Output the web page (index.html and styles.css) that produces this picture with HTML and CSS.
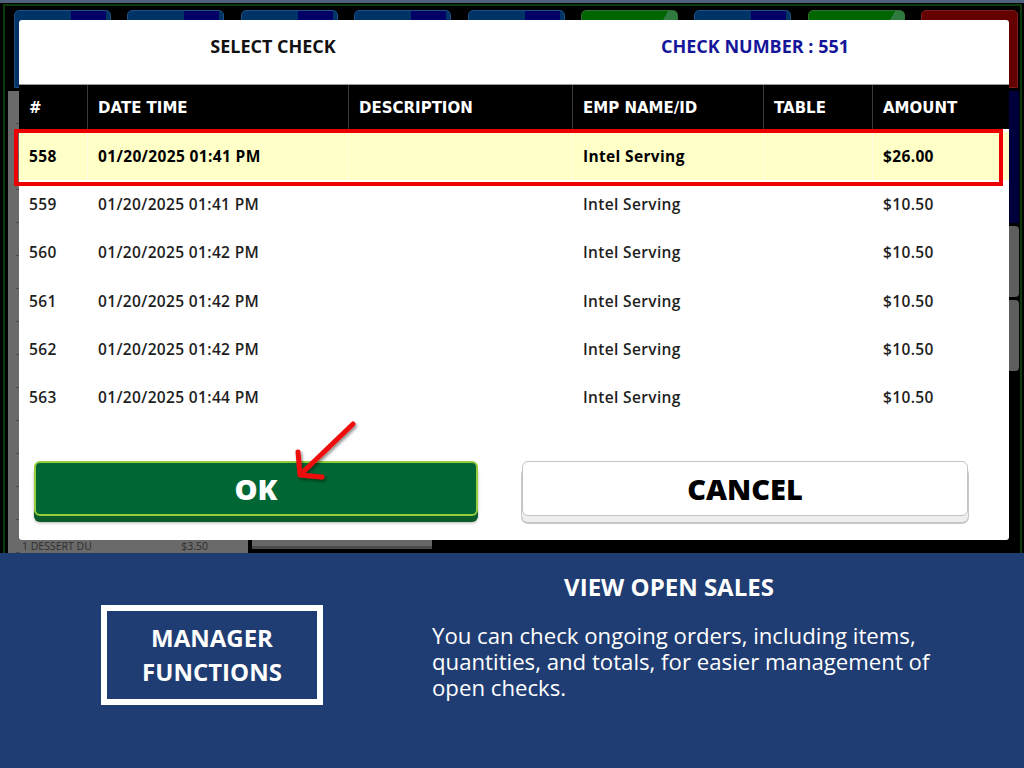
FILE: index.html
```html
<!DOCTYPE html>
<html>
<head>
<meta charset="utf-8">
<link rel="stylesheet" href="styles.css">
</head>
<body>
<div class="screen">
  <div class="pos">
    <div class="pos-topline"></div>
    <div class="pos-frame">
      <div class="tabs">
        <div class="tab tab-blue"></div>
        <div class="tab tab-blue"></div>
        <div class="tab tab-blue"></div>
        <div class="tab tab-blue"></div>
        <div class="tab tab-blue"></div>
        <div class="tab tab-green"></div>
        <div class="tab tab-blue"></div>
        <div class="tab tab-green"></div>
        <div class="tab tab-red"></div>
      </div>
      <div class="pos-body">
        <div class="order">
          <div class="order-item"><span>1 DESSERT DU</span><span>$3.50</span></div>
        </div>
        <div class="pos-mid"><div class="sub-panel"></div></div>
        <div class="pos-side">
          <div class="side-navy"></div>
          <div class="side-btn"></div>
          <div class="side-btn"></div>
        </div>
      </div>
    </div>
  </div>

  <div class="dialog">
    <div class="dlg-head">
      <div class="dlg-title">SELECT CHECK</div>
      <div class="dlg-check">CHECK NUMBER : 551</div>
    </div>
    <div class="grid">
      <div class="thead">
        <div class="th">#</div>
        <div class="th">DATE TIME</div>
        <div class="th">DESCRIPTION</div>
        <div class="th">EMP NAME/ID</div>
        <div class="th">TABLE</div>
        <div class="th">AMOUNT</div>
      </div>
      <div class="tbody">
        <div class="tr tr-sel">
          <div class="td">558</div><div class="td">01/20/2025 01:41 PM</div><div class="td"></div><div class="td">Intel Serving</div><div class="td"></div><div class="td">$26.00</div>
        </div>
        <div class="tr">
          <div class="td">559</div><div class="td">01/20/2025 01:41 PM</div><div class="td"></div><div class="td">Intel Serving</div><div class="td"></div><div class="td">$10.50</div>
        </div>
        <div class="tr">
          <div class="td">560</div><div class="td">01/20/2025 01:42 PM</div><div class="td"></div><div class="td">Intel Serving</div><div class="td"></div><div class="td">$10.50</div>
        </div>
        <div class="tr">
          <div class="td">561</div><div class="td">01/20/2025 01:42 PM</div><div class="td"></div><div class="td">Intel Serving</div><div class="td"></div><div class="td">$10.50</div>
        </div>
        <div class="tr">
          <div class="td">562</div><div class="td">01/20/2025 01:42 PM</div><div class="td"></div><div class="td">Intel Serving</div><div class="td"></div><div class="td">$10.50</div>
        </div>
        <div class="tr">
          <div class="td">563</div><div class="td">01/20/2025 01:44 PM</div><div class="td"></div><div class="td">Intel Serving</div><div class="td"></div><div class="td">$10.50</div>
        </div>
      </div>
    </div>
    <div class="actions">
      <div class="btn btn-ok">OK</div>
      <div class="btn btn-cancel">CANCEL</div>
    </div>
  </div>

  <div class="highlight"></div>
  <svg class="arrow" width="80" height="80" viewBox="0 0 80 80">
    <defs>
      <filter id="sh" x="-30%" y="-30%" width="160%" height="160%">
        <feDropShadow dx="1.5" dy="2" stdDeviation="1.5" flood-color="#000" flood-opacity="0.45"/>
      </filter>
    </defs>
    <g filter="url(#sh)" fill="none" stroke="#ee1111" stroke-width="5" stroke-linecap="round" stroke-linejoin="round">
      <path d="M68 14 L17 63"/>
      <path d="M13 42 L15 65 L37 67"/>
    </g>
  </svg>
</div>

<div class="info">
  <div class="info-box">MANAGER<br>FUNCTIONS</div>
  <div class="info-text">
    <div class="info-title">VIEW OPEN SALES</div>
    <p class="info-desc">You can check ongoing orders, including items, quantities, and totals, for easier management of open checks.</p>
  </div>
</div>
</body>
</html>
```

FILE: styles.css
```css
* { box-sizing: border-box; }
html, body { margin: 0; padding: 0; }
body {
  width: 1024px;
  height: 768px;
  overflow: hidden;
  background: #1f3d72;
  font-family: "Open Sans", "Liberation Sans", sans-serif;
}

/* ---------- background POS screen ---------- */
.screen {
  position: relative;
  height: 553px;
  background: #000;
  overflow: hidden;
}
.pos { height: 100%; display: flex; flex-direction: column; }
.pos-topline { height: 3px; background: #50617d; }
.pos-frame {
  flex: 1;
  margin: 1px 2px 0 3px;
  border: 2px solid #0b3a0b;
  border-bottom: none;
  display: flex;
  flex-direction: column;
}
.tabs {
  display: flex;
  gap: 16.4px;
  padding: 4px 0 0 9px;
  height: 82px;
}
.tab {
  width: 97px;
  height: 78px;
  border-radius: 5px 5px 0 0;
}
.tab-blue {
  background: linear-gradient(90deg, #003366 0 59%, #000066 59% 96%, #003366 96%);
  border: 1px solid #1b4f86;
}
.tab-green {
  background: linear-gradient(120deg, #006600 0 62%, #2e7a40 62% 86%, #006600 86%);
  border: 1px solid #2f6f2f;
}
.tab-red {
  background: #640000;
  border: 1px solid #7a1e1e;
}
.pos-body {
  flex: 1;
  display: flex;
  padding: 3px 0 0 3px;
}
.order {
  width: 240px;
  background: #6a6a6a repeating-linear-gradient(180deg, transparent 0 32px, #4a4a4a 32px 33px) 8px 0 / 4px 100% no-repeat;
  display: flex;
  flex-direction: column;
  justify-content: flex-end;
}
.order-item {
  display: flex;
  justify-content: space-between;
  padding: 0 40px 0 14px;
  font-family: "Open Sans", sans-serif;
  font-size: 10.5px;
  line-height: 13px;
  height: 13px;
  color: #2e2e2e;
}
.pos-mid { flex: 1; display: flex; align-items: flex-end; padding-left: 4px; }
.sub-panel {
  width: 180px;
  height: 80px;
  background: #666;
  border-bottom: 3px solid #4a4a4a;
  margin-bottom: 4px;
}
.pos-side {
  width: 60px;
  margin-right: 1px;
  display: flex;
  flex-direction: column;
  gap: 3px;
}
.side-navy { height: 132px; background: #00003d; }
.side-btn { height: 71px; background: #5e5e5e; border-radius: 4px; }

/* ---------- dialog ---------- */
.dialog {
  position: absolute;
  left: 19px;
  top: 20px;
  width: 990px;
  height: 520px;
  background: #fff;
  border-radius: 3px;
  display: flex;
  flex-direction: column;
}
.dlg-head {
  height: 65px;
  display: grid;
  grid-template-columns: 508px 1fr;
  border-bottom: 1px solid #9a9a9a;
  padding-top: 14px;
  font-weight: 700;
  font-size: 18px;
  line-height: 24px;
}
.dlg-title { text-align: center; color: #111; }
.dlg-check { text-align: center; color: #15159a; padding-right: 26px; }

.grid { display: flex; flex-direction: column; }
.thead, .tr {
  display: grid;
  grid-template-columns: 69px 261px 224px 191px 109px 136px;
}
.thead {
  height: 44px;
  background: #000;
}
.th {
  border-right: 1px solid #3a3a3a;
  padding-left: 10px;
  display: flex;
  align-items: center;
  padding-top: 1px;
  font-family: "DejaVu Sans", sans-serif;
  font-weight: 700;
  font-size: 15px;
  color: #fff;
}
.th:last-child { border-right: none; }
.tbody { padding-top: 3px; height: 294px; overflow: hidden; }
.tr { height: 48.2px; }
.td {
  padding-left: 10px;
  display: flex;
  align-items: center;
  font-size: 15.5px;
  letter-spacing: 0.35px;
  font-weight: 600;
  color: #1e1e1e;
  white-space: nowrap;
}
.tr-sel { background: #ffffc8; }
.tr-sel .td { font-weight: 700; color: #000; border-right: 1px solid #fbfbe8; }
.tr-sel .td:last-child { border-right: none; }

.actions {
  margin-top: auto;
  display: grid;
  grid-template-columns: 444px 446px;
  gap: 44px;
  padding: 0 0 24px 15px;
}
.btn {
  height: 55px;
  border-radius: 6px;
  display: flex;
  align-items: center;
  justify-content: center;
  font-size: 29px;
  font-weight: 800;
}
.btn-ok {
  background: #006633;
  border: 2px solid #94cc3a;
  color: #fff;
  box-shadow: 0 6px 0 #0b5a2b, 0 7px 3px rgba(0,0,0,.3);
}
.btn-cancel {
  background: #fff;
  border: 1px solid #c4c4c4;
  color: #000;
  box-shadow: 0 6px 0 #eeeeee, 0 7px 0 1px #c8c8c8;
}

/* annotation overlays */
.highlight {
  position: absolute;
  left: 14px;
  top: 129px;
  width: 989px;
  height: 57px;
  border: 4.5px solid #ee0000;
}
.arrow {
  position: absolute;
  left: 285px;
  top: 410px;
}

/* ---------- info panel ---------- */
.info {
  height: 215px;
  display: flex;
  align-items: flex-start;
  padding-left: 101px;
  color: #fff;
}
.info-box {
  margin-top: 52px;
  width: 222px;
  height: 100px;
  border: 6px solid #fff;
  display: flex;
  align-items: center;
  justify-content: center;
  text-align: center;
  font-size: 24px;
  font-weight: 700;
  line-height: 34px;
}
.info-text {
  margin-left: 109px;
  width: 512px;
  padding-top: 19px;
}
.info-title {
  text-align: center;
  padding-right: 38px;
  font-size: 24px;
  font-weight: 700;
  line-height: 30px;
}
.info-desc {
  margin: 21px 0 0 0;
  font-size: 22.2px;
  line-height: 26px;
}
```
